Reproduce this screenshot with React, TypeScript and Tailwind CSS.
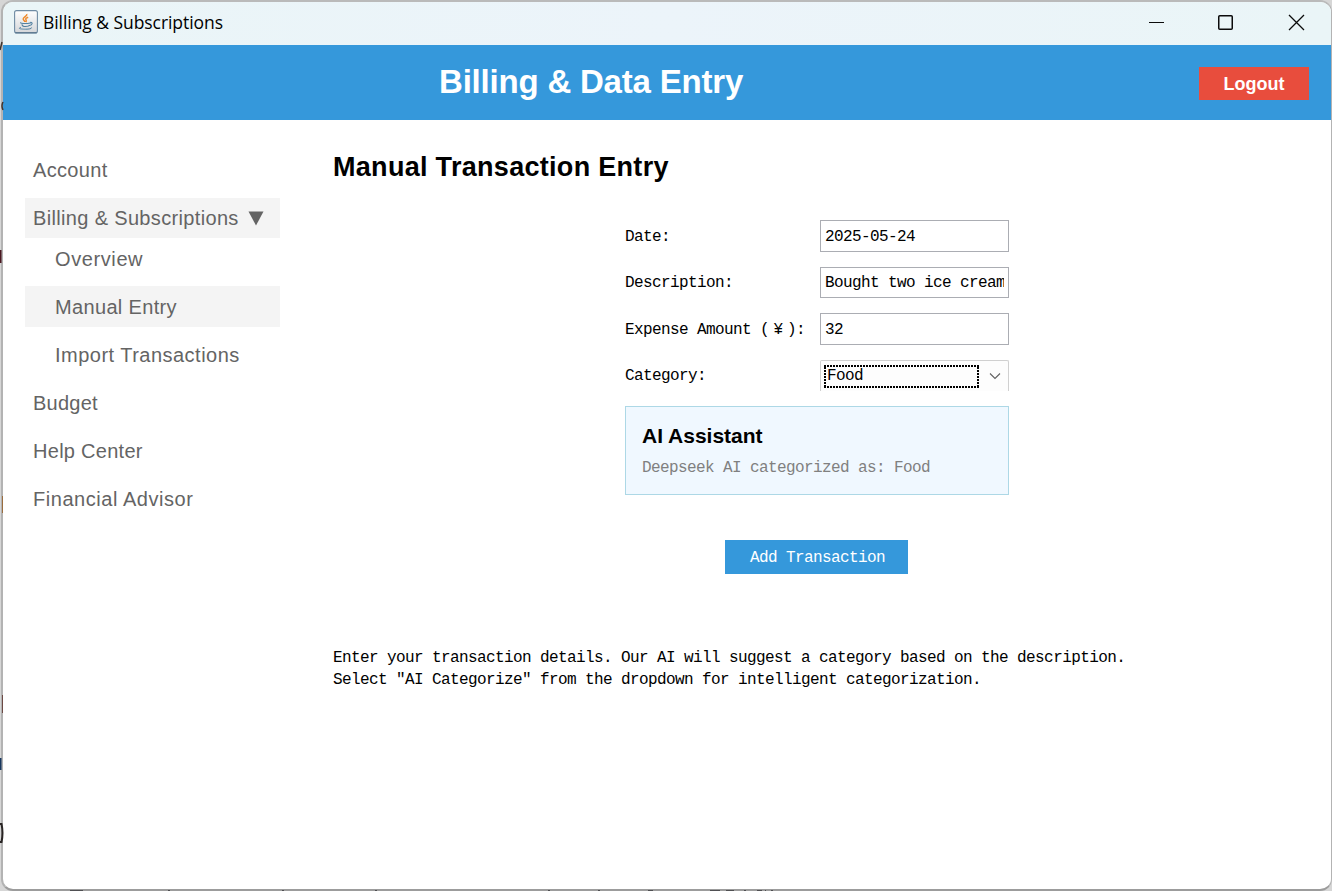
import type { ReactNode } from "react";

const mono = "font-['Liberation_Mono','Noto_Sans_CJK_SC',monospace] text-[16px] tracking-[-0.6px] leading-[22px] whitespace-pre";

function JavaIcon() {
  return (
    <svg width="24" height="24" viewBox="0 0 24 24" fill="none">
      <defs>
        <linearGradient id="tile" x1="0" y1="0" x2="0" y2="1">
          <stop offset="0" stopColor="#ffffff" />
          <stop offset="1" stopColor="#d4d6d9" />
        </linearGradient>
      </defs>
      <rect x="0.6" y="0.6" width="22.8" height="22.4" rx="2" fill="url(#tile)" stroke="#6f8ba3" strokeWidth="1.1" />
      <path d="M1.5 22.8h21" stroke="#46657f" />
      <path d="M12.8 4c.8 2-4 3-3.600 5.200.2 1 1.500 1.700 1.700 2.700M14.200 7.200c-2 .7-3 1.500-2.200 2.600.6.9.4 1.500-.2 2.200" stroke="#ee8a2c" strokeWidth="1.500" />
      <path d="M7 12.400c-1.500.8 1.500 1.100 4.500 1.100s5-.4 5.500-.9M8 14.200c0 2 1 2.300 3.500 2.300s3.700-.4 4-1.300M16.200 12.500c3-.6 2.300 2.500-.7 3" stroke="#5382a1" strokeWidth="1.100" />
      <path d="M7 17.300c-4 1.200 0 1.900 4.700 1.900 4.300 0 7-.9 5.300-1.900" stroke="#5382a1" />
    </svg>
  );
}

function NavItem({ children, active, sub, h = "h-10", spacing = "tracking-[0.34px]" }: { children: ReactNode; active?: boolean; sub?: boolean; h?: string; spacing?: string }) {
  return (
    <div className={`flex w-[255px] shrink-0 items-center ${h} ${sub ? "pl-[30px]" : "pl-2"} ${active ? "bg-[#f4f4f4]" : ""}`}>
      <span className={`flex items-center whitespace-nowrap text-[20px] leading-6 text-[#646464] ${spacing}`}>{children}</span>
    </div>
  );
}

function Field({ label, value, h }: { label: ReactNode; value: string; h: string }) {
  return (
    <div className={`flex items-center ${h}`}>
      <label className={`w-[195px] shrink-0 pt-px text-black ${mono}`}>{label}</label>
      <div className="flex h-full w-[189px] items-center border border-[#abadb3] bg-white px-1">
        <span className={`w-full overflow-hidden pt-px text-black ${mono}`}>{value}</span>
      </div>
    </div>
  );
}

function Backdrop() {
  return (
    <svg className="absolute left-0 top-0" width="1332" height="891" fill="none">
      <path d="M0 50l2-8M3 102q-2 4 0 8" stroke="#40332b" strokeWidth="1.500" />
      <path d="M0 250v13" stroke="#4a1720" strokeWidth="3" />
      <path d="M2.500 496v17" stroke="#9a6d3e" />
      <path d="M2.500 695v18" stroke="#6d4a44" />
      <path d="M0 758v12" stroke="#18375e" strokeWidth="3" />
      <path d="M0 824h1.500q2 9 0 18H0" stroke="#292524" strokeWidth="2" />
      <path d="M70 890.500h13M168 890.500h2M282 890.500h2M375 890.500h2M548 890.500h2M598 890.500h2M648 890.500h5M710 890.500h10M726 890.500h8M744 890.500h2M757 890.500h5M765 890.500h1M771 890.500h2" stroke="#4f4f52" />
    </svg>
  );
}

export default function App() {
  return (
    <div className="relative h-[891px] w-[1332px] overflow-hidden bg-[#d6d6d6] pl-px font-['Liberation_Sans',Arial,sans-serif]">
      <div className="flex h-[891px] w-[1331px] flex-col overflow-hidden rounded-[12px] border-2 border-r border-[#b3b3b3] border-t-[#bababa] border-b-[#9c9c9c] bg-white">
        <div className="flex h-[43px] shrink-0 items-center bg-linear-to-r from-[#eaf5f7] via-[#ecf4fa] to-[#eaf5f7] pb-1 pl-[11px]">
          <JavaIcon />
          <span className="ml-[5px] font-['Open_Sans',sans-serif] text-[17.5px] leading-5 tracking-[-0.06px] text-black">Billing &amp; Subscriptions</span>
          <svg className="ml-auto mr-[25px]" width="158" height="18" viewBox="0 0 158 18" fill="none" stroke="#0b0b0b">
            <path d="M1 9.500h15" />
            <rect x="70.750" y="2.750" width="13.500" height="13.500" rx="1" strokeWidth="1.500" />
            <path d="M141 2l15 15M156 2l-15 15" strokeWidth="1.300" />
          </svg>
        </div>

        <header className="flex h-[75px] shrink-0 items-center justify-between bg-[#3598db] pr-[22px]">
          <h1 className="flex-1 pb-0.5 pl-[436px] text-[33px] font-bold leading-10 tracking-[-0.2px] text-white">Billing &amp; Data Entry</h1>
          <button className="mt-0.5 h-[33px] w-[110px] bg-[#e84d3d] text-[18px] font-bold leading-6 text-white">Logout</button>
        </header>

        <div className="flex flex-1">
          <nav className="flex w-[330px] shrink-0 flex-col pl-[22px] pt-[30px]">
            <NavItem>Account</NavItem>
            <div className="h-2" />
            <NavItem active>
              Billing &amp; Subscriptions
              <svg className="ml-[9px]" width="16" height="15" viewBox="0 0 16 15"><path d="M.5.500h15L8 14.500z" fill="#646464" /></svg>
            </NavItem>
            <NavItem sub h="h-[41px]" spacing="tracking-[0.6px]">Overview</NavItem>
            <div className="h-[7px]" />
            <NavItem sub active h="h-[41px]">Manual Entry</NavItem>
            <div className="h-2" />
            <NavItem sub spacing="tracking-[0.48px]">Import Transactions</NavItem>
            <div className="h-2" />
            <NavItem spacing="tracking-[0.25px]">Budget</NavItem>
            <div className="h-2" />
            <NavItem spacing="tracking-[0.28px]">Help Center</NavItem>
            <div className="h-2" />
            <NavItem spacing="tracking-[0.54px]">Financial Advisor</NavItem>
          </nav>

          <main className="flex flex-1 flex-col pt-[31px]">
            <h2 className="text-[27px] font-bold leading-8 tracking-[0.3px] text-black">Manual Transaction Entry</h2>

            <form className="ml-[292px] mt-[37px] flex w-[384px] flex-col">
              <div className="flex flex-col gap-[15px]">
                <Field label="Date:" value="2025-05-24" h="h-8" />
                <Field label="Description:" value="Bought two ice cream" h="h-[31px]" />
                <Field label={<>Expense Amount (<span className="inline-block w-[18px] text-center">¥</span>):</>} value="32" h="h-8" />
                <div className="flex h-[31px] items-center">
                  <label className={`w-[195px] shrink-0 pt-px text-black ${mono}`}>Category:</label>
                  <div className="flex h-full w-[189px] items-center rounded-t-[2px] border border-b-0 border-[#d0d0d0] bg-[#fdfdfd] pl-[3px]">
                    <div className="relative h-[23px] w-[155px]">
                      <svg className="absolute left-0 top-0" width="155" height="23" fill="none">
                        <path d="M0 1h155M0 22h155M1 2v19M154 2v19" stroke="#000" strokeWidth="2" strokeDasharray="2 1" />
                      </svg>
                      <span className={`block pl-[3px] text-black ${mono}`}>Food</span>
                    </div>
                    <svg className="ml-2.5" width="12" height="8" fill="none"><path d="M1 1.500l5 5 5-5" stroke="#606060" strokeWidth="1.100" /></svg>
                  </div>
                </div>
              </div>

              <section className="mt-[15px] h-[89px] border border-[#add8e6] bg-[#f0f8ff] px-4 pt-[17px]">
                <h3 className="text-[21px] font-bold leading-6 text-black">AI Assistant</h3>
                <p className={`mt-[9px] text-[#808080] ${mono}`}>Deepseek AI categorized as: Food</p>
              </section>

              <button type="button" className={`ml-[100px] mt-[45px] h-[34px] w-[183px] bg-[#3598db] pl-0.5 pt-0.5 text-white ${mono}`}>Add Transaction</button>
            </form>

            <p className={`mt-[73px] text-black ${mono}`}>{'Enter your transaction details. Our AI will suggest a category based on the description.\nSelect "AI Categorize" from the dropdown for intelligent categorization.'}</p>
          </main>
        </div>
      </div>
      <Backdrop />
    </div>
  );
}
